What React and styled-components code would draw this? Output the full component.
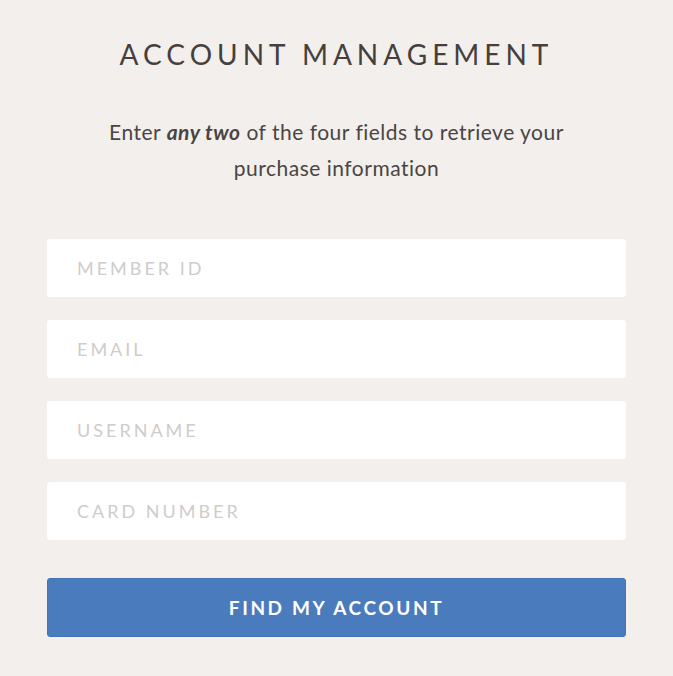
import React from 'react';
import styled, { createGlobalStyle } from 'styled-components';

const Global = createGlobalStyle`
  body {
    margin: 0;
    background: #f2efec;
    font-family: "Lato", "Open Sans", sans-serif;
  }
`

const Page = styled.div`
  width: 579px;
  margin: 0 auto;
  padding-top: 36px;
  display: flex;
  flex-direction: column;
  align-items: stretch;
`

const Title = styled.h1`
  margin: 0;
  text-align: center;
  font-size: 28px;
  font-weight: 400;
  letter-spacing: 5px;
  color: #45403d;
  line-height: 36px;
`

const Subtitle = styled.p`
  margin: 42px 0 0;
  text-align: center;
  font-size: 21px;
  letter-spacing: 0.5px;
  line-height: 36px;
  color: #4a4543;
  padding: 0 45px;
  em {
    font-weight: 700;
  }
`

const Form = styled.form`
  margin-top: 53px;
  display: flex;
  flex-direction: column;
  gap: 23px;
`

const Field = styled.input`
  height: 58px;
  box-sizing: border-box;
  border: none;
  border-radius: 3px;
  background: #fff;
  padding: 0 30px;
  font-family: inherit;
  font-size: 18px;
  letter-spacing: 3px;
  color: #444;
  outline: none;
  &::placeholder {
    color: #cfcccb;
  }
`

const Button = styled.button`
  margin-top: 15px;
  height: 59px;
  border: 1px solid #4474b4;
  border-radius: 3px;
  background: #4a7bbd;
  color: #fff;
  font-family: inherit;
  font-size: 19px;
  font-weight: 700;
  letter-spacing: 2.6px;
  cursor: pointer;
`

const fields = ['MEMBER ID', 'EMAIL', 'USERNAME', 'CARD NUMBER']

export default function App() {
  return (
    <>
      <Global />
      <Page>
        <Title>ACCOUNT MANAGEMENT</Title>
        <Subtitle>
          Enter <em>any two</em> of the four fields to retrieve your purchase information
        </Subtitle>
        <Form onSubmit={(e) => e.preventDefault()}>
          {fields.map((f) => (
            <Field key={f} placeholder={f} />
          ))}
          <Button type="submit">FIND MY ACCOUNT</Button>
        </Form>
      </Page>
    </>
  )
}
